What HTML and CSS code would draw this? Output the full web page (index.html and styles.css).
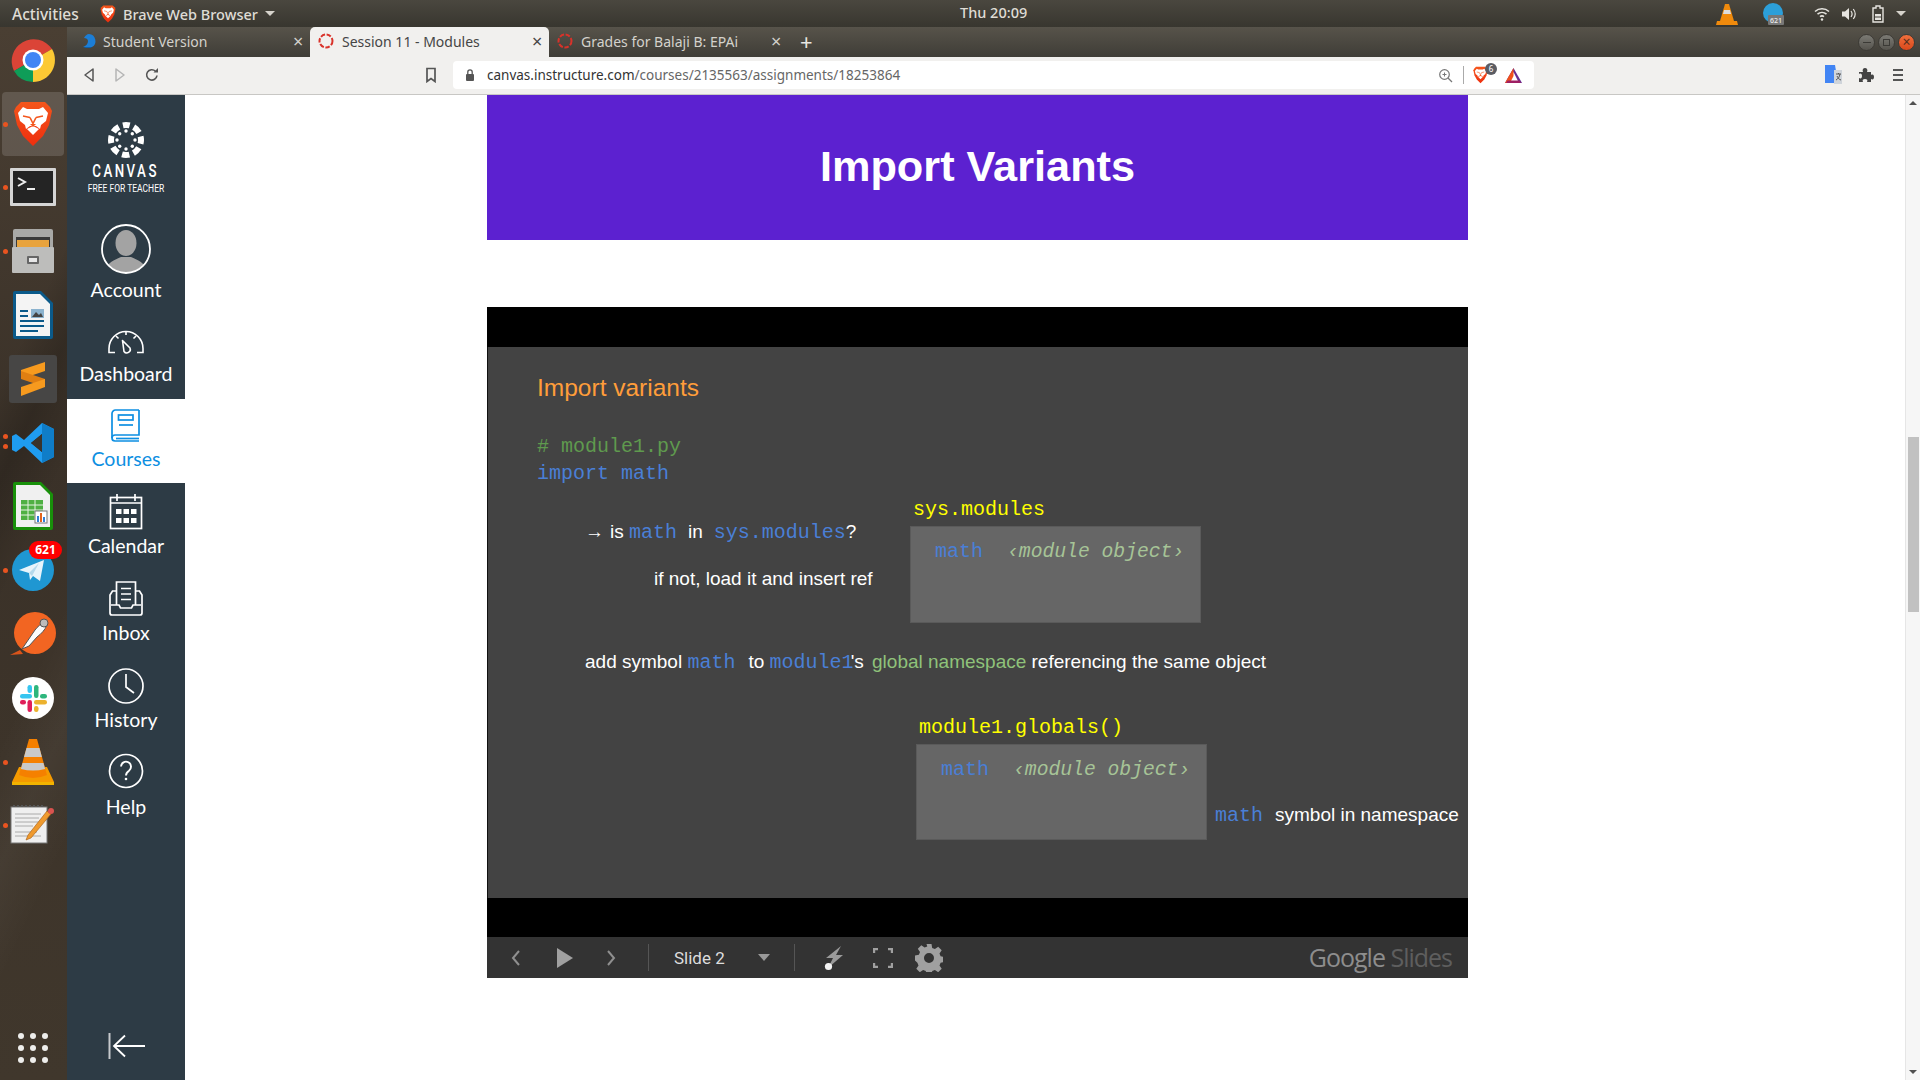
FILE: index.html
```html
<!DOCTYPE html>
<html lang="en">
<head>
  <meta charset="UTF-8" />
  <title>Session 11 - Modules</title>
  <link rel="stylesheet" href="styles.css">
</head>
<body>
  <svg class="sprite" width="0" height="0">
    <defs>
      <linearGradient id="braveFill" x1="0" y1="0" x2="0" y2="1"><stop offset="0" stop-color="#f4561c"/><stop offset="1" stop-color="#ee2e0e"/></linearGradient>
    </defs>
    <symbol id="brave" viewBox="0 0 40 46">
      <path d="M8 1h24l5 5 2 4-3 14-6 11-10 10-10-10-6-11L1 10l2-4z" fill="url(#braveFill)"/>
      <path d="M10 6l4 2h12l4-2 5 6-2 8-5 4-1 4-4-3h-6l-4 3-1-4-5-4-2-8z" fill="#fff"/>
      <path d="M14 28l6-3 6 3-6 6z" fill="#fff"/>
      <path d="M10 15l7 1.500M30 15l-7 1.500M17 16.500l3 6 3-6" fill="none" stroke="#f4561c" stroke-width="1.600"/>
      <path d="M17 23h6l-3 3z" fill="#f4561c"/>
    </symbol>
  </svg>

  <div class="topbar">
    <span class="activities">Activities</span>
    <div class="app-menu">
      <svg width="16" height="18"><use href="#brave"/></svg>
      <span>Brave Web Browser</span>
      <span class="caret"></span>
    </div>
    <div class="clock">Thu 20:09</div>
    <div class="tray">
      <svg class="tray-vlc" width="24" height="24" viewBox="0 0 24 24"><path d="M10 2h4l5 17H5z" fill="#f08a0c"/><path d="M9 8h6l1 4H8z" fill="#ddd"/><path d="M2 19h20l1 4H1z" fill="#f08a0c"/></svg>
      <svg class="tray-tg" width="26" height="26" viewBox="0 0 26 26"><circle cx="11" cy="12" r="10" fill="#2c9fd9"/><rect x="6" y="14" width="16" height="10" rx="1" fill="#777"/><text x="14" y="22" class="tray-count">621</text></svg>
      <svg class="tray-wifi" width="16" height="16" viewBox="0 0 16 16" fill="none" stroke="#e6e4df" stroke-width="1.600"><path d="M1 5.500c4-3.600 10-3.600 14 0M3.500 8.200c2.600-2.300 6.400-2.300 9 0M6 10.700c1.200-1 2.800-1 4 0"/><circle cx="8" cy="13.500" r="1.200" fill="#e6e4df" stroke="none"/></svg>
      <svg class="tray-sound" width="16" height="16" viewBox="0 0 16 16"><path d="M1 5.500h3l4-3.500v12l-4-3.500H1z" fill="#e6e4df"/><path d="M10 5c1.300 1.800 1.300 4.200 0 6M12.300 3c2.300 3 2.300 7 0 10" fill="none" stroke="#e6e4df" stroke-width="1.200"/></svg>
      <svg class="tray-bat" width="14" height="18" viewBox="0 0 14 18"><path d="M5 1h4v2h3v14H2V3h3z" fill="none" stroke="#e6e4df" stroke-width="1.400"/><rect x="4" y="9" width="6" height="2.500" fill="#e6e4df"/><rect x="4" y="12.500" width="6" height="2.500" fill="#e6e4df"/></svg>
      <span class="caret tray-caret"></span>
    </div>
  </div>

  <div class="desktop">
    <aside class="dock">
      <div class="dock-item">
        <svg width="46" height="46" viewBox="0 0 46 46"><path d="M23 23L4 34A22 22 0 0 1 42 12z" fill="#db4437"/><path d="M23 23L42 12A22 22 0 0 1 23 45z" fill="#fcc934"/><path d="M23 23V45A22 22 0 0 1 4 34z" fill="#0f9d58"/><circle cx="23" cy="23" r="10.500" fill="#fff"/><circle cx="23" cy="23" r="8" fill="#4285f4"/></svg>
      </div>
      <div class="dock-item is-open is-current">
        <svg width="40" height="46"><use href="#brave"/></svg>
      </div>
      <div class="dock-item is-open">
        <svg width="46" height="38" viewBox="0 0 46 38"><rect width="46" height="38" rx="1" fill="#d5d5d5"/><rect x="3" y="3" width="40" height="32" fill="#242424"/><path d="M8 10l7 4-7 4" fill="none" stroke="#eee" stroke-width="2"/><rect x="17" y="20" width="8" height="2" fill="#eee"/></svg>
      </div>
      <div class="dock-item is-open">
        <svg width="42" height="44" viewBox="0 0 42 44"><rect x="1" y="0" width="40" height="44" rx="2" fill="#a9a9a7"/><rect x="4" y="8" width="34" height="12" fill="#3a3a3a"/><rect x="5" y="11" width="32" height="7" fill="#e8a33d"/><rect x="0" y="18" width="42" height="26" rx="1" fill="#bdbdbb"/><rect x="15" y="27" width="12" height="8" rx="1" fill="#666"/><rect x="17" y="29" width="8" height="4" fill="#e6e6e6"/></svg>
      </div>
      <div class="dock-item">
        <svg width="40" height="48" viewBox="0 0 40 48"><path d="M2 0h26l12 12v34a2 2 0 0 1-2 2H2a2 2 0 0 1-2-2V2a2 2 0 0 1 2-2z" fill="#0b5a8a"/><path d="M3 3h24l10 10v32H3z" fill="#f4f4f4"/><path d="M7 19h8v2H7zM7 24h8v2H7zM7 29h24v2H7zM7 34h24v2H7zM7 39h18v2H7z" fill="#0b5a8a"/><rect x="18" y="18" width="13" height="9" fill="#8bb3cf"/><path d="M19 26l4-5 3 3 2-2 2 4z" fill="#444"/></svg>
      </div>
      <div class="dock-item">
        <div class="dock-tile">
          <svg width="26" height="34" viewBox="0 0 26 34"><path d="M25 0v9L1 17V8z" fill="#f79a1e"/><path d="M1 9l24 8v8L1 17z" fill="#e07f12"/><path d="M25 17v8L1 34v-9z" fill="#f79a1e"/></svg>
        </div>
      </div>
      <div class="dock-item is-double">
        <svg width="42" height="42" viewBox="0 0 42 42"><path d="M30 1l12 6v28l-12 6-18-17-8 6-4-2V14l4-2 8 6zM30 12L19 21l11 9z" fill="#1f9cf0"/><path d="M30 1l12 6v28l-12 6z" fill="#0f7dc8"/><path d="M30 12v18l-11-9z" fill="#3a332b"/></svg>
      </div>
      <div class="dock-item">
        <svg width="40" height="48" viewBox="0 0 40 48"><path d="M2 0h26l12 12v34a2 2 0 0 1-2 2H2a2 2 0 0 1-2-2V2a2 2 0 0 1 2-2z" fill="#18900a"/><path d="M3 3h24l10 10v32H3z" fill="#f0f0f0"/><rect x="8" y="18" width="22" height="20" fill="#4fb043"/><path d="M8 23h22M8 28h22M8 33h22M15 18v20M22 18v20" stroke="#e6f3e3" stroke-width="1"/><rect x="22" y="29" width="12" height="12" fill="#fff" stroke="#777"/><path d="M24 34h2v6h-2z" fill="#2f7fd6"/><path d="M27 31h2v9h-2z" fill="#e2631c"/><path d="M30 35h2v5h-2z" fill="#2f7fd6"/></svg>
      </div>
      <div class="dock-item is-open">
        <svg width="42" height="42" viewBox="0 0 42 42"><circle cx="21" cy="21" r="21" fill="#1f97d2"/><path d="M7 21l25-10-4 21-7-5-3 4-1-7z" fill="#e8f4fb"/><path d="M17 24l10-10-7 13z" fill="#b6d9ec"/></svg>
        <span class="dock-badge">621</span>
      </div>
      <div class="dock-item">
        <svg width="46" height="46" viewBox="0 0 46 46"><circle cx="25" cy="22" r="21" fill="#f26522"/><path d="M12 38l13-19c2-3 7-7 9-8l3 3c-2 5-6 9-10 12l-8 9z" fill="#fbfbfb" stroke="#555"/><circle cx="34" cy="12" r="4" fill="#bbb" stroke="#555"/><path d="M0 44l10-5 3 4z" fill="#d9541a"/></svg>
      </div>
      <div class="dock-item">
        <svg width="42" height="42" viewBox="0 0 42 42"><circle cx="21" cy="21" r="21" fill="#fff"/><rect x="8" y="17" width="12" height="4.500" rx="2.200" fill="#36c5f0"/><rect x="15.500" y="8" width="4.500" height="8" rx="2.200" fill="#36c5f0"/><rect x="22" y="8" width="4.500" height="13" rx="2.200" fill="#2eb67d"/><rect x="28" y="17" width="7" height="4.500" rx="2.200" fill="#2eb67d"/><rect x="22" y="23" width="13" height="4.500" rx="2.200" fill="#ecb22e"/><rect x="22" y="29" width="4.500" height="6" rx="2.200" fill="#ecb22e"/><rect x="15.500" y="23" width="4.500" height="12" rx="2.200" fill="#e01e5a"/><rect x="8" y="23" width="6" height="4.500" rx="2.200" fill="#e01e5a"/></svg>
      </div>
      <div class="dock-item is-open">
        <svg width="42" height="46" viewBox="0 0 42 46"><path d="M7 28L0 43h42l-7-15z" fill="#f59a00"/><path d="M17 0h8l10 36q-14 6-28 0z" fill="#f58000"/><path d="M14.500 9h13l2.400 9H12z" fill="#c9c9c9"/><path d="M10.500 24h21l1.600 6q-12 3-24.200 0z" fill="#c9c9c9"/><rect y="43" width="42" height="3" fill="#f2b300"/></svg>
      </div>
      <div class="dock-item is-open">
        <svg width="46" height="40" viewBox="0 0 46 40"><rect x="1" y="2" width="36" height="36" fill="#efefef" stroke="#777"/><path d="M4 2V0M8 2V0M12 2V0M16 2V0M20 2V0M24 2V0M28 2V0M32 2V0" stroke="#555" stroke-width="2"/><path d="M5 9h26M5 13h24M5 17h26M5 21h18M5 27h22M5 31h26" stroke="#aaa" stroke-width="1"/><path d="M18 30l-2 5 5-2 20-24-4-3z" fill="#ef9a2e" stroke="#a55a10" stroke-width=".6"/><circle cx="41" cy="6" r="3" fill="#d9534f"/></svg>
      </div>
      <div class="dock-apps">
        <i></i><i></i><i></i><i></i><i></i><i></i><i></i><i></i><i></i>
      </div>
    </aside>

    <div class="window">
      <div class="tabstrip">
        <div class="tab">
          <svg class="favicon" width="16" height="16" viewBox="0 0 16 16"><path d="M8 1a7 7 0 0 1 3 13H2c3-1 5-3 5-6 0-2-2-3-4-3 1-2 3-4 5-4z" fill="#1c7ed6"/><path d="M2 14h9c-1 1-2 1-3 1-2 0-4 0-6-1z" fill="#0d5fa8"/></svg>
          <span class="tab-title">Student Version</span>
          <span class="tab-close">×</span>
        </div>
        <div class="tab is-active">
          <svg class="favicon" width="16" height="16" viewBox="0 0 16 16"><circle cx="8" cy="8" r="6.500" fill="none" stroke="#d9322a" stroke-width="2" stroke-dasharray="4.500 1.600"/></svg>
          <span class="tab-title">Session 11 - Modules</span>
          <span class="tab-close">×</span>
        </div>
        <div class="tab">
          <svg class="favicon" width="16" height="16" viewBox="0 0 16 16"><circle cx="8" cy="8" r="6.500" fill="none" stroke="#d9322a" stroke-width="2" stroke-dasharray="4.500 1.600"/></svg>
          <span class="tab-title">Grades for Balaji B: EPAi</span>
          <span class="tab-close">×</span>
        </div>
        <span class="tab-new">+</span>
        <div class="win-controls">
          <span class="win-btn"><i class="win-min"></i></span>
          <span class="win-btn"><i class="win-max"></i></span>
          <span class="win-btn win-close">×</span>
        </div>
      </div>

      <div class="toolbar">
        <svg class="tool-back" width="14" height="16" viewBox="0 0 14 16"><path d="M11 2v12L3 8z" fill="none" stroke="#555" stroke-width="1.500" stroke-linejoin="round"/></svg>
        <svg class="tool-fwd" width="14" height="16" viewBox="0 0 14 16"><path d="M3 2v12l8-6z" fill="none" stroke="#b5b5b5" stroke-width="1.500" stroke-linejoin="round"/></svg>
        <svg class="tool-reload" width="16" height="16" viewBox="0 0 16 16"><path d="M13 8.500A5.200 5.200 0 1 1 11.500 4.200" fill="none" stroke="#555" stroke-width="1.600"/><path d="M9.500 5.500H14V1z" fill="#555"/></svg>
        <svg class="tool-bookmark" width="12" height="16" viewBox="0 0 12 16"><path d="M2 1.500h8v13l-4-3-4 3z" fill="none" stroke="#555" stroke-width="1.700"/></svg>
        <div class="urlbar">
          <svg class="url-lock" width="12" height="14" viewBox="0 0 12 14"><rect x="2" y="6" width="8" height="7" rx="1" fill="#555"/><path d="M3.800 6V4a2.200 2.200 0 0 1 4.400 0v2" fill="none" stroke="#555" stroke-width="1.300"/></svg>
          <span class="url-text"><span class="url-host">canvas.instructure.com</span>/courses/2135563/assignments/18253864</span>
          <svg class="url-zoom" width="15" height="15" viewBox="0 0 15 15"><circle cx="6.500" cy="6.500" r="4.800" fill="none" stroke="#777" stroke-width="1.200"/><path d="M10 10l4 4" stroke="#777" stroke-width="1.300"/><path d="M4.500 6.500h4M6.500 4.500v4" stroke="#777"/></svg>
          <span class="url-sep"></span>
          <span class="url-brave">
            <svg width="15" height="18"><use href="#brave"/></svg>
            <span class="url-brave-count">6</span>
          </span>
          <svg class="url-bat" width="19" height="17" viewBox="0 0 19 17"><path d="M9.500 1L18 16H1z" fill="#662d91"/><path d="M9.500 5L14 14H5z" fill="#fff"/><path d="M9.500 1L1 16h5L9.500 9z" fill="#f1511b"/><path d="M2 16h15l-1.500-2.500h-12z" fill="#9e1f63"/></svg>
        </div>
        <svg class="tool-translate" width="17" height="20" viewBox="0 0 17 20"><path d="M0 0h10l3 18H0z" fill="#4285f4"/><path d="M9 5h8v14H9z" fill="#cfd4da"/><path d="M11 9h5M13.500 8v1M15 9c-.5 3-2 5-4 6M12 11c1 2 2 3.500 4 4" fill="none" stroke="#555"/></svg>
        <svg class="tool-puzzle" width="16" height="16" viewBox="0 0 16 16"><path d="M1 5h4c-1-2 0-4 2-4s3 2 2 4h4v3c2-1 3 0 3 2s-1 3-3 2v3H9c1-2 0-3-2-3s-3 1-2 3H1v-4c2 1 3 0 3-2S3 6 1 7z" fill="#444"/></svg>
        <span class="tool-menu"><i></i><i></i><i></i></span>
      </div>

      <div class="page">
        <nav class="canvas-nav">
          <div class="nav-logo">
            <svg width="36" height="36" viewBox="0 0 36 36"><circle cx="18" cy="18" r="15" fill="none" stroke="#fff" stroke-width="6" stroke-dasharray="7.500 4.280" stroke-dashoffset="3.750" transform="rotate(-90 18 18)"/><g fill="#fff"><circle cx="18" cy="9" r="1.700"/><circle cx="18" cy="27" r="1.700"/><circle cx="9" cy="18" r="1.700"/><circle cx="27" cy="18" r="1.700"/><circle cx="11.700" cy="11.700" r="1.700"/><circle cx="24.300" cy="11.700" r="1.700"/><circle cx="11.700" cy="24.300" r="1.700"/><circle cx="24.300" cy="24.300" r="1.700"/></g></svg>
            <span class="logo-name">CANVAS</span>
            <span class="logo-sub">FREE FOR TEACHER</span>
          </div>

          <a class="nav-item nav-account">
            <svg class="nav-avatar" width="50" height="50" viewBox="0 0 50 50"><defs><clipPath id="avatarClip"><circle cx="25" cy="25" r="23.500"/></clipPath></defs><g clip-path="url(#avatarClip)" fill="#a3a3a3"><ellipse cx="25" cy="19" rx="10.500" ry="13"/><path d="M4 49c1-11 10-13 16-16h10c6 3 15 5 16 16z"/></g><circle cx="25" cy="25" r="24" fill="none" stroke="#fff" stroke-width="1.800"/></svg>
            <span>Account</span>
          </a>
          <a class="nav-item nav-dashboard">
            <svg width="44" height="44" viewBox="0 0 44 44" fill="none" stroke="#fff" stroke-width="1.600"><path d="M11 34.500H5v-4a17 17 0 0 1 34 0v4h-6"/><path d="M22 13.500v3.500M12 18l2.500 2.500M32 18l-2.500 2.500"/><path d="M18.500 22.500l7.500 7.500a3.500 3.500 0 0 1-6 3.500z" stroke-linejoin="round"/></svg>
            <span>Dashboard</span>
          </a>
          <a class="nav-item nav-courses is-active">
            <svg width="44" height="44" viewBox="0 0 44 44" fill="none" stroke="#0d8fe2" stroke-width="1.700"><path d="M35 7H11.500A3.500 3.500 0 0 0 8 10.500V35a3 3 0 0 0 3 3h24"/><path d="M35 7v25H11a3 3 0 0 0-3 3"/><path d="M12 35.500h23"/><rect x="14.500" y="12" width="14.500" height="5"/><path d="M15 22h14"/></svg>
            <span>Courses</span>
          </a>
          <a class="nav-item nav-calendar">
            <svg width="44" height="44" viewBox="0 0 44 44" fill="none" stroke="#fff" stroke-width="1.700"><rect x="6.500" y="7.500" width="31" height="31"/><path d="M13 4v7M31 4v7M7 13h30"/><g fill="#fff" stroke="none"><rect x="12" y="19" width="5.500" height="5"/><rect x="19.500" y="19" width="5.500" height="5"/><rect x="27" y="19" width="5.500" height="5"/><rect x="12" y="28" width="5.500" height="5"/><rect x="19.500" y="28" width="5.500" height="5"/><rect x="27" y="28" width="5.500" height="5"/></g></svg>
            <span>Calendar</span>
          </a>
          <a class="nav-item nav-inbox">
            <svg width="44" height="44" viewBox="0 0 44 44" fill="none" stroke="#fff" stroke-width="1.700"><path d="M12.500 28V5h19v23"/><path d="M17 11.500h10M17 17h10M17 22.500h10"/><path d="M12 14H8.500L6 18v18a2 2 0 0 0 2 2h28a2 2 0 0 0 2-2V18l-2.500-4H32"/><path d="M7 28h8l1.500 3h11l1.500-3h8"/></svg>
            <span>Inbox</span>
          </a>
          <a class="nav-item nav-history">
            <svg width="44" height="44" viewBox="0 0 44 44" fill="none" stroke="#fff" stroke-width="1.700"><circle cx="22" cy="22" r="17"/><path d="M22 10v13l8 6"/></svg>
            <span>History</span>
          </a>
          <a class="nav-item nav-help">
            <svg width="44" height="44" viewBox="0 0 44 44" fill="none" stroke="#fff" stroke-width="1.700"><circle cx="22" cy="20" r="16.500"/><path d="M17 15.500a5 5 0 1 1 8 4.200c-2 1.400-3 2.300-3 4.800" stroke-width="1.900"/><circle cx="22" cy="28" r="1.300" fill="#fff" stroke="none"/></svg>
            <span>Help</span>
          </a>
          <div class="nav-collapse">
            <svg width="38" height="28" viewBox="0 0 38 28" fill="none" stroke="#fff"><path d="M1.500 1v26" stroke="#c6c9cc" stroke-width="2"/><path d="M6 14h31" stroke-width="2"/><path d="M17 3.500L6 14l11 10.500" stroke-width="1.800"/></svg>
          </div>
        </nav>

        <main class="content">
          <header class="banner">Import Variants</header>
          <section class="embed">
            <div class="band band-top"></div>
            <div class="slide">
              <h2 class="s-title">Import variants</h2>
              <div class="s-line s-comment code">#<span class="sp"></span>module1.py</div>
              <div class="s-line s-import code blue">import math</div>

              <div class="s-line s-is"><span class="arrow">→</span>is <span class="code blue">math</span><span class="gap-in">in</span><span class="code blue gap-sys">sys.modules</span>?</div>
              <div class="s-line s-ifnot">if not, load it and insert ref</div>
              <div class="s-line s-sysmods code yellow">sys.modules</div>
              <div class="s-box s-box1"><span class="code blue">math</span><span class="code obj">‹module object›</span></div>

              <div class="s-line s-add">add symbol <span class="code blue">math</span><span class="gap-to">to</span> <span class="code blue">module1</span><span class="poss">'s</span> <span class="green">global namespace</span> referencing the same object</div>

              <div class="s-line s-globals code yellow">module1.globals()</div>
              <div class="s-box s-box2"><span class="code blue">math</span><span class="code obj">‹module object›</span></div>
              <div class="s-line s-symbol"><span class="code blue">math</span><span class="gap-sym">symbol in namespace</span></div>
            </div>
            <div class="band"></div>
            <div class="controls">
              <svg class="c-prev" width="12" height="18" viewBox="0 0 12 18"><path d="M9 2L3 9l6 7" fill="none" stroke="#8f8f8f" stroke-width="2"/></svg>
              <svg class="c-play" width="18" height="20" viewBox="0 0 18 20"><path d="M1 0l16 10L1 20z" fill="#a0a0a0"/></svg>
              <svg class="c-next" width="12" height="18" viewBox="0 0 12 18"><path d="M3 2l6 7-6 7" fill="none" stroke="#8f8f8f" stroke-width="2"/></svg>
              <span class="c-div c-div1"></span>
              <span class="c-slide">Slide 2</span>
              <span class="c-caret"></span>
              <span class="c-div c-div2"></span>
              <svg class="c-bolt" width="20" height="26" viewBox="0 0 20 26"><path d="M17 1L2 13h7L4 23l15-13h-7z" fill="#9a9a9a"/><circle cx="4.500" cy="21.500" r="3.600" fill="#f4f4f4"/></svg>
              <svg class="c-full" width="20" height="20" viewBox="0 0 20 20" fill="none" stroke="#a0a0a0" stroke-width="2.400"><path d="M1 5V1h4M15 1h4v4M19 15v4h-4M5 19H1v-4"/></svg>
              <svg class="c-gear" width="28" height="28" viewBox="0 0 28 28"><path fill-rule="evenodd" fill="#a0a0a0" d="M11.500 0h5l.7 3.900 2.700 1.100 3.300-2.200 3.500 3.500-2.200 3.300 1.100 2.700 3.900.7v5l-3.900.7-1.100 2.700 2.200 3.300-3.500 3.500-3.300-2.200-2.700 1.100-.7 3.900h-5l-.7-3.900-2.700-1.100-3.300 2.200-3.500-3.500 2.200-3.300-1.100-2.700L0 16.500v-5l3.900-.7L5 8.100 2.800 4.800l3.500-3.500 3.300 2.200 2.700-1.100zM14 9a5 5 0 1 0 0 10 5 5 0 0 0 0-10z"/></svg>
              <span class="c-brand">Google <span class="c-brand-dim">Slides</span></span>
            </div>
          </section>
        </main>

        <div class="scrollbar">
          <span class="sb-up"></span>
          <span class="sb-thumb"></span>
          <span class="sb-down"></span>
        </div>
      </div>
    </div>
  </div>
</body>
</html>
```

FILE: styles.css
```css
* {
  box-sizing: border-box;
}
html, body {
  margin: 0;
  height: 1080px;
  overflow: hidden;
}
body {
  width: 1920px;
  font-family: "Noto Sans", sans-serif;
  background-color: #3a332b;
}
svg {
  display: block;
  flex: none;
}
.sprite {
  position: absolute;
}

/* ubuntu top bar */
.topbar {
  height: 27px;
  display: flex;
  align-items: center;
  position: relative;
  background: linear-gradient(#4a473f, #38362f);
  color: #dfdcd5;
  font-size: 14.500px;
  font-weight: 500;
}
.activities {
  margin-left: 12px;
  width: 88px;
  font-size: 15.500px;
}
.app-menu {
  display: flex;
  align-items: center;
  gap: 7px;
}
.caret {
  width: 0;
  height: 0;
  border-left: 5px solid transparent;
  border-right: 5px solid transparent;
  border-top: 5px solid #d6d3cc;
}
.clock {
  position: absolute;
  left: 960px;
  top: 2px;
}
.tray {
  margin-left: auto;
  display: flex;
  align-items: center;
  padding-right: 14px;
}
.tray-vlc { margin-right: 23px; }
.tray-tg { margin-right: 26px; }
.tray-wifi { margin-right: 11px; }
.tray-sound { margin-right: 14px; }
.tray-bat { margin-right: 11px; }
.tray-count {
  font-family: "Noto Sans", sans-serif;
  font-size: 7px;
  fill: #eee;
  text-anchor: middle;
}

.desktop {
  height: 1053px;
  display: flex;
}

/* launcher */
.dock {
  width: 67px;
  flex: none;
  padding: 1px 1px 0 0;
  position: relative;
  background:
    linear-gradient(115deg, transparent 30%, rgba(0,0,0,.18) 38%, transparent 48%, transparent 60%, rgba(255,255,255,.04) 70%, transparent 80%),
    linear-gradient(#4a3f33, #3a3128 40%, #40372c);
}
.dock-item {
  height: 63.800px;
  display: flex;
  align-items: center;
  justify-content: center;
  position: relative;
}
.dock-item.is-open::before {
  content: "";
  position: absolute;
  left: 3px;
  top: 50%;
  width: 5px;
  height: 5px;
  margin-top: -2px;
  border-radius: 50%;
  background-color: #e95420;
}
.dock-item.is-double::before,
.dock-item.is-double::after {
  content: "";
  position: absolute;
  left: 3px;
  width: 5px;
  height: 5px;
  border-radius: 50%;
  background-color: #e95420;
}
.dock-item.is-double::before { top: 23px; }
.dock-item.is-double::after { top: 33px; }
.dock-item.is-current {
  background-color: rgba(255,255,255,.14);
  border-radius: 4px;
  margin: 0 2px;
}
.dock-item.is-current::before {
  left: 1px;
}
.dock-tile {
  width: 48px;
  height: 48px;
  border-radius: 3px;
  background-color: #474645;
  display: flex;
  align-items: center;
  justify-content: center;
}
.dock-badge {
  position: absolute;
  left: 29px;
  top: 3px;
  width: 33px;
  height: 18px;
  border-radius: 9px;
  background-color: #f00;
  color: #fff;
  font-size: 12px;
  font-weight: 700;
  line-height: 18px;
  text-align: center;
}
.dock-apps {
  position: absolute;
  left: 18px;
  bottom: 17px;
  display: grid;
  grid-template-columns: repeat(3, 6px);
  gap: 6px;
}
.dock-apps i {
  width: 6px;
  height: 6px;
  border-radius: 50%;
  background-color: #eeeeec;
}

/* browser window */
.window {
  flex: 1;
  display: flex;
  flex-direction: column;
  min-width: 0;
}
.tabstrip {
  height: 30px;
  display: flex;
  align-items: center;
  background: linear-gradient(#57534a, #3f3d37);
  font-size: 14px;
  color: #d4d2cc;
}
.tab {
  width: 239px;
  height: 30px;
  display: flex;
  align-items: center;
  padding: 0 0 2px 8px;
  border-radius: 5px 5px 0 0;
}
.tab:first-child {
  width: 243px;
  padding-left: 14px;
}
.tab:first-child .favicon {
  margin-right: 6px;
}
.tab.is-active {
  background-color: #f1f0ee;
  color: #454545;
}
.favicon {
  margin-right: 8px;
}
.tab-title {
  flex: 1;
}
.tab-close {
  width: 17px;
  font-size: 18px;
  line-height: 1;
}
.tab-new {
  margin-left: 12px;
  padding-bottom: 3px;
  font-size: 22px;
  line-height: 1;
  color: #e8e6e1;
}
.win-controls {
  margin-left: auto;
  display: flex;
  gap: 3px;
  padding-right: 5px;
}
.win-btn {
  width: 17px;
  height: 17px;
  border-radius: 50%;
  background: linear-gradient(#7b7a74, #56544e);
  border: 1px solid #3d3b36;
  display: flex;
  align-items: center;
  justify-content: center;
}
.win-min {
  width: 8px;
  height: 1px;
  background-color: #3b3a36;
}
.win-max {
  width: 7px;
  height: 7px;
  border: 1px solid #3b3a36;
}
.win-close {
  background: linear-gradient(#f0703d, #d9481b);
  color: #55301f;
  font-size: 14px;
  line-height: 1;
}

.toolbar {
  height: 38px;
  display: flex;
  align-items: center;
  background-color: #f1f0ee;
  border-bottom: 1px solid #c8c7c4;
  padding: 0 0 1px 15px;
}
.tool-fwd { margin-left: 17px; }
.tool-reload { margin-left: 17px; }
.tool-bookmark { margin-left: 265px; }
.urlbar {
  width: 1081px;
  height: 28px;
  margin-left: 16px;
  display: flex;
  align-items: center;
  background-color: #fff;
  border-radius: 4px;
  padding-left: 11px;
  font-size: 13.500px;
  color: #666;
}
.url-text {
  margin-left: 11px;
  width: 948px;
}
.url-host {
  color: #333;
}
.url-zoom { margin-left: 3px; }
.url-sep {
  width: 1px;
  height: 18px;
  margin-left: 10px;
  background-color: #aaa;
}
.url-brave {
  margin-left: 9px;
  position: relative;
}
.url-brave-count {
  position: absolute;
  left: 12px;
  top: -3px;
  width: 12px;
  height: 12px;
  border-radius: 50%;
  background-color: #5b5c63;
  color: #fff;
  font-size: 8px;
  line-height: 12px;
  text-align: center;
}
.url-bat { margin-left: 16px; }
.tool-translate { margin-left: 291px; }
.tool-puzzle { margin-left: 16px; }
.tool-menu {
  margin-left: 19px;
  display: flex;
  flex-direction: column;
  gap: 3px;
}
.tool-menu i {
  width: 10px;
  height: 2px;
  background-color: #555;
}

.page {
  flex: 1;
  display: flex;
  min-height: 0;
  background-color: #fff;
}

/* canvas sidebar */
.canvas-nav {
  width: 118px;
  flex: none;
  display: flex;
  flex-direction: column;
  position: relative;
  background-color: #2d3b45;
  color: #fff;
  font-family: Lato, sans-serif;
  font-size: 19.500px;
}
.nav-logo {
  height: 132px;
  padding-top: 27px;
  display: flex;
  flex-direction: column;
  align-items: center;
}
.logo-name {
  margin-top: 1.500px;
  font-family: Roboto, sans-serif;
  font-size: 19px;
  font-weight: 500;
  letter-spacing: 3.500px;
  line-height: 22px;
  transform: scaleX(.7);
  white-space: nowrap;
}
.logo-sub {
  margin-top: 1px;
  font-family: Roboto, sans-serif;
  font-size: 10px;
  line-height: 12px;
  transform: scaleX(.85);
  white-space: nowrap;
}
.nav-item {
  height: 87px;
  display: flex;
  flex-direction: column;
  align-items: center;
  justify-content: flex-end;
  padding-bottom: 12px;
  line-height: 24px;
}
.nav-dashboard { height: 85px; padding-bottom: 13px; }
.nav-courses { height: 84px; }
.nav-avatar { margin-bottom: 4px; }
.nav-item.is-active {
  background-color: #fff;
  color: #0d8fe2;
}
.nav-collapse {
  position: absolute;
  left: 41px;
  bottom: 20px;
}

/* page body */
.content {
  flex: 1;
  padding-left: 302px;
  min-width: 0;
}
.banner {
  width: 981px;
  height: 145px;
  display: flex;
  align-items: center;
  justify-content: center;
  padding-bottom: 2px;
  background-color: #5c21d0;
  color: #fff;
  font-family: "Liberation Sans", sans-serif;
  font-size: 43.300px;
  font-weight: 700;
}
.embed {
  width: 981px;
  margin-top: 67px;
  font-family: "Liberation Sans", sans-serif;
}
.band {
  height: 39px;
  background-color: #000;
}
.band-top { height: 40px; }

/* slide text boxes sit on a free canvas */
.slide {
  height: 551px;
  position: relative;
  background-color: #434343;
  border-left: 1px solid #111;
  color: #fff;
  font-size: 19px;
}
.code {
  font-family: "Liberation Mono", monospace;
  font-size: 20px;
}
.blue { color: #4a7fd6; }
.yellow { color: #ffff00; }
.green { color: #8fc27a; }
.s-title {
  position: absolute;
  left: 49px;
  top: 26px;
  margin: 0;
  font-size: 24.500px;
  font-weight: 400;
  line-height: 30px;
  color: #ff9d3a;
}
.s-line {
  position: absolute;
  white-space: nowrap;
  line-height: 24px;
}
.s-comment { left: 49px; top: 88px; color: #5f9a4e; }
.s-comment .sp { display: inline-block; width: 12px; }
.s-import { left: 49px; top: 115px; }
.s-is { left: 97px; top: 173px; }
.arrow { margin-right: 6px; font-size: 19px; }
.gap-in { margin-left: 11px; }
.gap-sys { margin-left: 11px; }
.s-ifnot { left: 166px; top: 220px; }
.s-sysmods { left: 425px; top: 151px; }
.s-box {
  position: absolute;
  width: 291px;
  height: 96px;
  padding: 12px 0 0 24px;
  background-color: #666;
  border: 1px solid #5a5a5a;
  line-height: 24px;
  white-space: nowrap;
}
.s-box1 { left: 422px; top: 179px; height: 97px; }
.s-box2 { left: 428px; top: 397px; }
.obj {
  margin-left: 24px;
  font-size: 19.700px;
  font-style: italic;
  color: #a6c497;
}
.s-add { left: 97px; top: 303px; }
.gap-to { margin-left: 13px; }
.poss { margin-left: -3px; }
.green { margin-left: 3px; }
.s-globals { left: 431px; top: 369px; }
.s-symbol { left: 727px; top: 456px; }
.gap-sym { margin-left: 12px; }

/* slides player bar */
.controls {
  height: 41px;
  display: flex;
  align-items: center;
  background-color: #333;
  padding-left: 23px;
  color: #ddd;
}
.c-play { margin-left: 34px; }
.c-next { margin-left: 31px; }
.c-div {
  width: 1px;
  height: 27px;
  background-color: #555;
}
.c-div1 { margin-left: 31px; }
.c-slide {
  margin-left: 25px;
  font-family: Roboto, sans-serif;
  font-size: 17px;
}
.c-caret {
  margin-left: 33px;
  width: 0;
  height: 0;
  border-left: 6px solid transparent;
  border-right: 6px solid transparent;
  border-top: 7px solid #999;
}
.c-div2 { margin-left: 24px; }
.c-bolt { margin-left: 29px; }
.c-full { margin-left: 29px; }
.c-gear { margin-left: 22px; }
.c-brand {
  margin-left: auto;
  padding: 0 16px 2px 0;
  font-family: "Open Sans", sans-serif;
  font-size: 25px;
  letter-spacing: -1px;
  color: #8d8d8d;
}
.c-brand-dim { color: #5e5e5e; }

/* scrollbar */
.scrollbar {
  width: 15px;
  flex: none;
  position: relative;
  background-color: #f6f6f6;
  border-left: 1px solid #e6e6e6;
}
.sb-thumb {
  position: absolute;
  left: 2px;
  top: 342px;
  width: 11px;
  height: 175px;
  background-color: #c1c1c1;
}
.sb-up, .sb-down {
  position: absolute;
  left: 3px;
  width: 0;
  height: 0;
  border-left: 4px solid transparent;
  border-right: 4px solid transparent;
}
.sb-up { top: 6px; border-bottom: 4px solid #505050; }
.sb-down { bottom: 6px; border-top: 4px solid #505050; }
```
